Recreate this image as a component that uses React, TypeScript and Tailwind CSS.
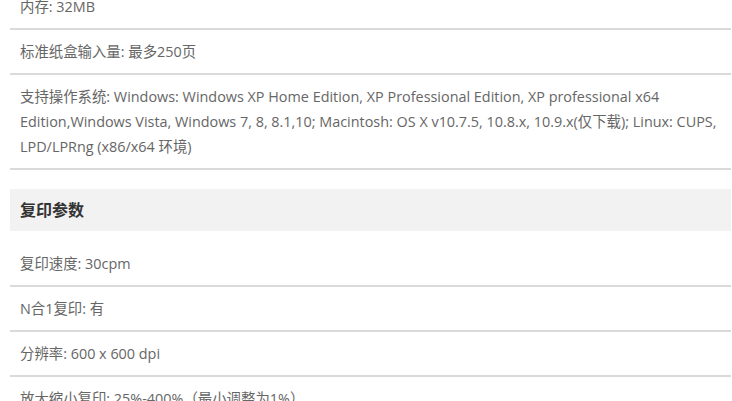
const font = {
  fontFamily: '"Open Sans", "Noto Sans CJK SC", sans-serif',
};

type Section = { title?: string; rows: string[] };

const sections: Section[] = [
  {
    rows: [
      "内存: 32MB",
      "标准纸盒输入量: 最多250页",
      "支持操作系统: Windows: Windows XP Home Edition, XP Professional Edition, XP professional x64 Edition,Windows Vista, Windows 7, 8, 8.1,10; Macintosh: OS X v10.7.5, 10.8.x, 10.9.x(仅下载); Linux: CUPS, LPD/LPRng (x86/x64 环境)",
    ],
  },
  {
    title: "复印参数",
    rows: [
      "复印速度: 30cpm",
      "N合1复印: 有",
      "分辨率: 600 x 600 dpi",
      "放大缩小复印: 25%-400%（最小调整为1%）",
    ],
  },
];

function Row({ text, first }: { text: string; first?: boolean }) {
  return (
    <div
      className={
        "border-b-2 border-[#dadada] px-[10px] pb-[9px] text-[14.4px] leading-[25px] text-[#666] " +
        (first ? "pt-[20px]" : "pt-[9px]")
      }
    >
      {text}
    </div>
  );
}

export default function App() {
  return (
    <div className="h-[401px] w-[732px] overflow-hidden bg-white" style={font}>
      <div className="ml-[10px] mr-[1px] mt-[-15px]">
        {sections.map((s, i) => (
          <div key={i} className={s.title ? "mt-[19px]" : ""}>
            {s.title && (
              <div className="flex h-[42px] items-center bg-[#f2f2f2] px-[10px] text-[16px] font-bold text-[#333]">
                {s.title}
              </div>
            )}
            {s.rows.map((r, j) => (
              <Row key={j} text={r} first={!!s.title && j === 0} />
            ))}
          </div>
        ))}
      </div>
    </div>
  );
}
